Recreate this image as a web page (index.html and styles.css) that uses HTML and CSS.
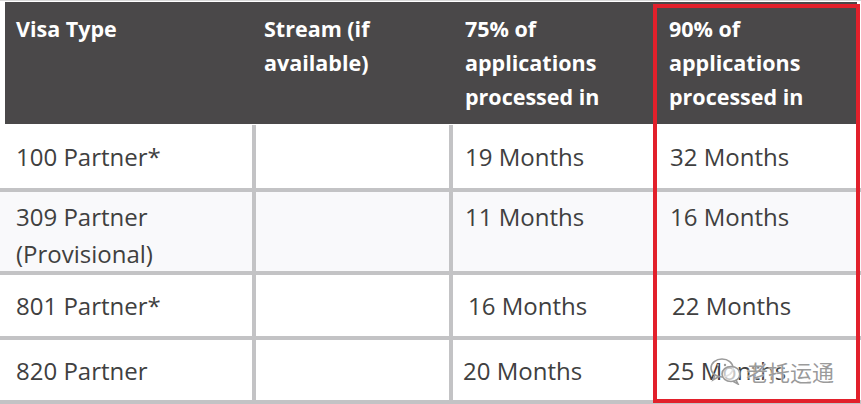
FILE: index.html
```html
<!DOCTYPE html>
<html lang="en">
<head>
<meta charset="utf-8">
<link rel="stylesheet" href="styles.css">
</head>
<body>
<div class="page">
  <div class="head">
    <div class="th c1">Visa Type</div>
    <div class="th c2">Stream (if available)</div>
    <div class="th c3">75% of applications processed in</div>
    <div class="th c4">90% of applications processed in</div>
  </div>
  <div class="body">
    <div class="td c1 r1">100 Partner*</div>
    <div class="td c2 r1"></div>
    <div class="td c3 r1">19 Months</div>
    <div class="td c4 r1">32 Months</div>

    <div class="td c1 r2 alt">309 Partner<br>(Provisional)</div>
    <div class="td c2 r2 alt"></div>
    <div class="td c3 r2 alt">11 Months</div>
    <div class="td c4 r2 alt">16 Months</div>

    <div class="td c1 r3">801 Partner*</div>
    <div class="td c2 r3"></div>
    <div class="td c3 r3 shift">16 Months</div>
    <div class="td c4 r3 shift">22 Months</div>

    <div class="td c1 r4">820 Partner</div>
    <div class="td c2 r4"></div>
    <div class="td c3 r4 back">20 Months</div>
    <div class="td c4 r4 back">25 Months</div>
  </div>
  <div class="highlight"></div>
  <div class="watermark">
    <svg class="wm-icon" width="34" height="28" viewBox="0 0 34 28" fill="none" stroke="#9a9a9a" stroke-width="1.6">
      <ellipse cx="13" cy="11" rx="11" ry="9"/>
      <path d="M6 18 L4 23 L10 19.5"/>
      <ellipse cx="22" cy="17" rx="9" ry="7.5" fill="rgba(255,255,255,0.7)"/>
      <path d="M27 23 L29 27 L24 24.3"/>
      <circle cx="9" cy="8" r="1.2" fill="#9a9a9a" stroke="none"/>
      <circle cx="16" cy="8" r="1.2" fill="#9a9a9a" stroke="none"/>
    </svg>
    <span class="wm-text">老托运通</span>
  </div>
</div>
</body>
</html>
```
FILE: styles.css
```css
html, body {
  margin: 0;
  padding: 0;
  background: #ffffff;
}
.page {
  position: relative;
  width: 861px;
  height: 404px;
  overflow: hidden;
  border-top: 1px solid #d8d8d8;
  box-sizing: border-box;
  font-family: "Open Sans", "Noto Sans", sans-serif;
}
.head {
  margin: 1px 4px 0 5px;
  height: 122px;
  background: #4a4849;
  display: grid;
  grid-template-columns: 247px 197px 200px 204px;
  column-gap: 0;
}
.th {
  color: #ffffff;
  font-weight: 700;
  font-size: 21.5px;
  line-height: 34px;
  padding-top: 10px;
  padding-right: 4px;
}
.head .c1 { padding-left: 11px; }
.head .c2 { padding-left: 12px; }
.head .c3 { padding-left: 16px; }
.head .c4 { padding-left: 20px; }

.body {
  margin-top: 1px;
  display: grid;
  grid-template-columns: 252px 193px 200px 204px;
  grid-template-rows: 63px 79px 61px 60px;
  column-gap: 4px;
  row-gap: 4px;
  padding-bottom: 4px;
  background: #c3c3c5;
}
.td {
  background: #ffffff;
  color: #404040;
  font-size: 24px;
  line-height: 37px;
  display: flex;
  flex-direction: column;
  justify-content: center;
  white-space: nowrap;
}
.td.alt {
  background: #f9f9fb;
  justify-content: flex-start;
  padding-top: 6px;
}
.body .c1 { padding-left: 16px; }
.body .c3 { padding-left: 12px; }
.body .c4 { padding-left: 13px; }
.body .c3.shift { padding-left: 15px; }
.body .c4.shift { padding-left: 15px; }
.body .c3.back { padding-left: 10px; }
.body .c4.back { padding-left: 10px; }

.highlight {
  position: absolute;
  left: 653px;
  top: 3px;
  width: 207px;
  height: 399px;
  border: 4px solid #e2202b;
  box-sizing: border-box;
}
.watermark {
  position: absolute;
  left: 709px;
  top: 354px;
  display: flex;
  align-items: center;
  gap: 3px;
}
.wm-text {
  font-family: "Noto Sans CJK SC", sans-serif;
  font-size: 22px;
  color: rgba(110, 110, 110, 0.7);
  text-shadow: 0 0 2px #ffffff, 0 0 1px #ffffff;
}
```
